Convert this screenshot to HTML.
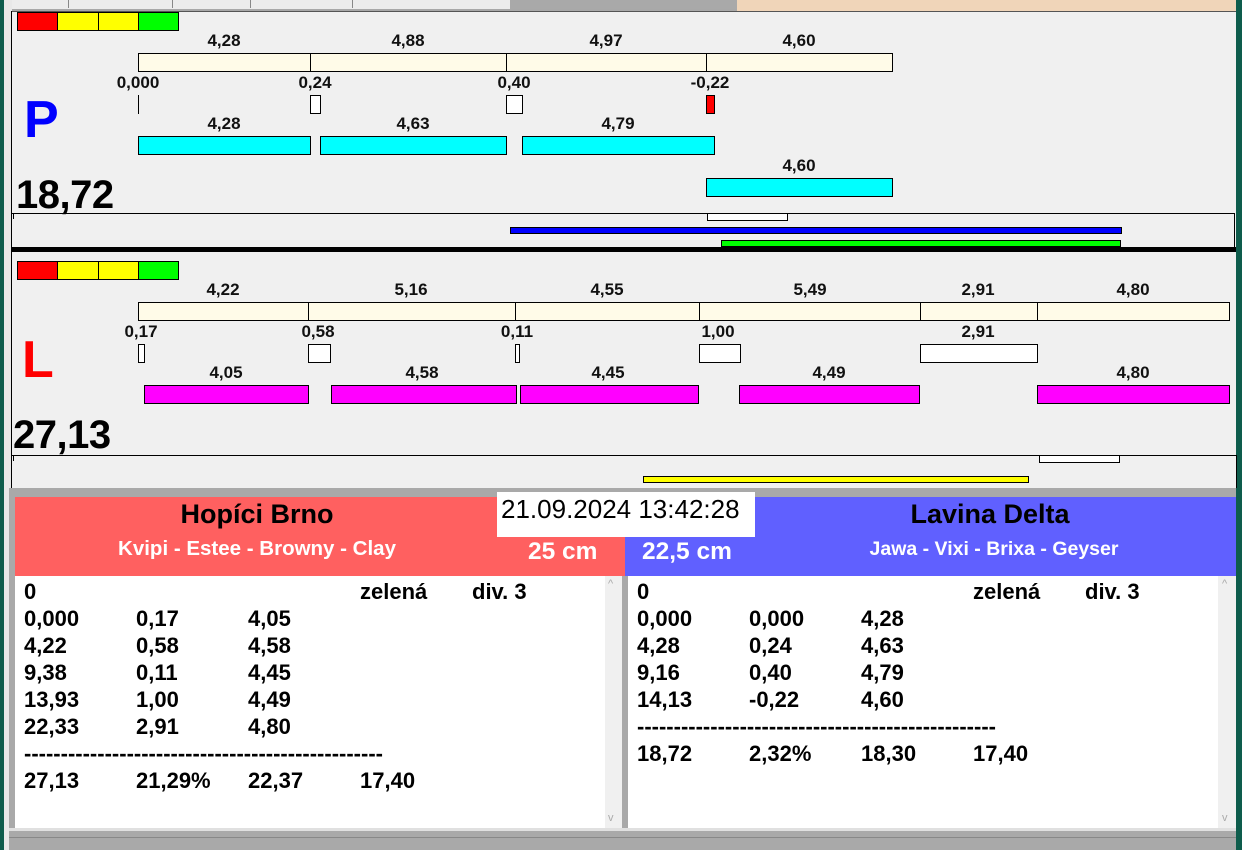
<!DOCTYPE html>
<html><head><meta charset="utf-8">
<style>
*{margin:0;padding:0;box-sizing:border-box}
body{width:1242px;height:850px;position:relative;overflow:hidden;background:#f0f0f0;font-family:"Liberation Sans",sans-serif}
div{position:absolute}
.b{border:1px solid #000}
.t{font-weight:bold;font-size:17px;color:#111;white-space:nowrap;transform:translateX(-50%);line-height:17px}
.cr{background:#fffbe8}
.cy{background:#00ffff}
.mg{background:#ff00ff}
.w{background:#fff}
.row{font-weight:bold;font-size:22px;color:#000;line-height:27px;white-space:nowrap}
</style></head><body>
<div style="left:0;top:0;width:4px;height:850px;background:#0e5c4c"></div>
<div style="left:4px;top:0;width:8px;height:850px;background:#e8e8e8"></div>
<div style="left:11px;top:11px;width:1px;height:480px;background:#000"></div>
<div style="left:1236px;top:0;width:6px;height:850px;background:#0e5c4c"></div>
<div style="left:12px;top:0;width:725px;height:11px;background:#ececec;border-bottom:2px solid #a8a8a8"></div>
<div style="left:68px;top:0;width:1px;height:8px;background:#888"></div>
<div style="left:172px;top:0;width:1px;height:8px;background:#888"></div>
<div style="left:250px;top:0;width:1px;height:8px;background:#888"></div>
<div style="left:352px;top:0;width:1px;height:8px;background:#888"></div>
<div style="left:510px;top:0;width:227px;height:9px;background:#a9a9a9"></div>
<div style="left:737px;top:0;width:499px;height:12px;background:#f0d5b9"></div>
<div style="left:12px;top:11px;width:1224px;height:1px;background:#555"></div>

<div class="b" style="left:17px;top:12px;width:41px;height:19px;background:#f00"></div>
<div class="b" style="left:57px;top:12px;width:42px;height:19px;background:#ff0"></div>
<div class="b" style="left:98px;top:12px;width:41px;height:19px;background:#ff0"></div>
<div class="b" style="left:138px;top:12px;width:41px;height:19px;background:#0f0"></div>

<div class="t" style="left:224px;top:32px">4,28</div>
<div class="t" style="left:408px;top:32px">4,88</div>
<div class="t" style="left:606px;top:32px">4,97</div>
<div class="t" style="left:799px;top:32px">4,60</div>
<div class="b cr" style="left:138px;top:53px;width:755px;height:19px"></div>
<div style="left:310px;top:53px;width:1px;height:19px;background:#000"></div>
<div style="left:506px;top:53px;width:1px;height:19px;background:#000"></div>
<div style="left:706px;top:53px;width:1px;height:19px;background:#000"></div>

<div class="t" style="left:138px;top:74px">0,000</div>
<div class="t" style="left:315px;top:74px">0,24</div>
<div class="t" style="left:514px;top:74px">0,40</div>
<div class="t" style="left:710px;top:74px">-0,22</div>
<div style="left:138px;top:95px;width:1px;height:19px;background:#000"></div>
<div class="b w" style="left:310px;top:95px;width:11px;height:19px"></div>
<div class="b w" style="left:506px;top:95px;width:17px;height:19px"></div>
<div class="b" style="left:706px;top:95px;width:9px;height:19px;background:#f00"></div>

<div class="t" style="left:224px;top:115px">4,28</div>
<div class="t" style="left:413px;top:115px">4,63</div>
<div class="t" style="left:618px;top:115px">4,79</div>
<div class="b cy" style="left:138px;top:136px;width:173px;height:19px"></div>
<div class="b cy" style="left:320px;top:136px;width:187px;height:19px"></div>
<div class="b cy" style="left:522px;top:136px;width:193px;height:19px"></div>
<div class="t" style="left:799px;top:157px">4,60</div>
<div class="b cy" style="left:706px;top:178px;width:187px;height:19px"></div>

<div style="left:24px;top:90px;font-weight:bold;font-size:52px;color:#0000ff;line-height:60px">P</div>
<div style="left:16px;top:172px;font-weight:bold;font-size:40px;color:#000;line-height:46px;letter-spacing:-0.5px">18,72</div>

<div style="left:12px;top:213px;width:1223px;height:1px;background:#000"></div>
<div style="left:1234px;top:213px;width:1px;height:35px;background:#000"></div>
<div style="left:13px;top:214px;width:1px;height:5px;background:#000"></div>
<div class="b w" style="left:707px;top:213px;width:81px;height:8px"></div>
<div class="b" style="left:510px;top:227px;width:612px;height:7px;background:#0000ff"></div>
<div class="b" style="left:721px;top:240px;width:400px;height:7px;background:#00ff00"></div>
<div style="left:12px;top:247px;width:1224px;height:5px;background:#000"></div>

<div class="b" style="left:17px;top:261px;width:41px;height:19px;background:#f00"></div>
<div class="b" style="left:57px;top:261px;width:42px;height:19px;background:#ff0"></div>
<div class="b" style="left:98px;top:261px;width:41px;height:19px;background:#ff0"></div>
<div class="b" style="left:138px;top:261px;width:41px;height:19px;background:#0f0"></div>

<div class="t" style="left:223px;top:281px">4,22</div>
<div class="t" style="left:411px;top:281px">5,16</div>
<div class="t" style="left:607px;top:281px">4,55</div>
<div class="t" style="left:810px;top:281px">5,49</div>
<div class="t" style="left:978px;top:281px">2,91</div>
<div class="t" style="left:1133px;top:281px">4,80</div>
<div class="b cr" style="left:138px;top:302px;width:1092px;height:19px"></div>
<div style="left:308px;top:302px;width:1px;height:19px;background:#000"></div>
<div style="left:515px;top:302px;width:1px;height:19px;background:#000"></div>
<div style="left:699px;top:302px;width:1px;height:19px;background:#000"></div>
<div style="left:920px;top:302px;width:1px;height:19px;background:#000"></div>
<div style="left:1037px;top:302px;width:1px;height:19px;background:#000"></div>

<div class="t" style="left:141px;top:323px">0,17</div>
<div class="t" style="left:318px;top:323px">0,58</div>
<div class="t" style="left:517px;top:323px">0,11</div>
<div class="t" style="left:718px;top:323px">1,00</div>
<div class="t" style="left:978px;top:323px">2,91</div>
<div class="b w" style="left:138px;top:344px;width:7px;height:19px"></div>
<div class="b w" style="left:308px;top:344px;width:23px;height:19px"></div>
<div class="b w" style="left:515px;top:344px;width:5px;height:19px"></div>
<div class="b w" style="left:699px;top:344px;width:42px;height:19px"></div>
<div class="b w" style="left:920px;top:344px;width:118px;height:19px"></div>

<div class="t" style="left:226px;top:364px">4,05</div>
<div class="t" style="left:422px;top:364px">4,58</div>
<div class="t" style="left:608px;top:364px">4,45</div>
<div class="t" style="left:829px;top:364px">4,49</div>
<div class="t" style="left:1133px;top:364px">4,80</div>
<div class="b mg" style="left:144px;top:385px;width:165px;height:19px"></div>
<div class="b mg" style="left:331px;top:385px;width:186px;height:19px"></div>
<div class="b mg" style="left:520px;top:385px;width:179px;height:19px"></div>
<div class="b mg" style="left:739px;top:385px;width:181px;height:19px"></div>
<div class="b mg" style="left:1037px;top:385px;width:193px;height:19px"></div>

<div style="left:22px;top:330px;font-weight:bold;font-size:52px;color:#ff0000;line-height:60px">L</div>
<div style="left:13px;top:412px;font-weight:bold;font-size:40px;color:#000;line-height:46px;letter-spacing:-0.5px">27,13</div>

<div style="left:12px;top:455px;width:1225px;height:1px;background:#000"></div>
<div style="left:1236px;top:455px;width:1px;height:33px;background:#000"></div>
<div style="left:13px;top:456px;width:1px;height:5px;background:#000"></div>
<div class="b w" style="left:1039px;top:455px;width:81px;height:8px"></div>
<div class="b" style="left:643px;top:476px;width:386px;height:7px;background:#ff0"></div>

<div style="left:9px;top:488px;width:1227px;height:362px;background:#a9a9a9"></div>
<div style="left:15px;top:497px;width:611px;height:79px;background:#ff6060"></div>
<div style="left:625px;top:497px;width:611px;height:79px;background:#6060ff"></div>
<div style="left:497px;top:492px;width:258px;height:45px;background:#fff"></div>
<div style="left:501px;top:493px;font-size:26px;color:#000;line-height:33px;white-space:nowrap">21.09.2024 13:42:28</div>
<div style="left:257px;top:499px;transform:translateX(-50%);font-weight:bold;font-size:27px;line-height:30px;white-space:nowrap">Hopíci Brno</div>
<div style="left:257px;top:538px;transform:translateX(-50%);font-weight:bold;font-size:20.5px;color:#fff;line-height:22px;white-space:nowrap">Kvipi - Estee - Browny - Clay</div>
<div style="left:528px;top:539px;font-weight:bold;font-size:24.5px;color:#fff;line-height:26px;white-space:nowrap">25 cm</div>
<div style="left:990px;top:499px;transform:translateX(-50%);font-weight:bold;font-size:27px;line-height:30px;white-space:nowrap">Lavina Delta</div>
<div style="left:994px;top:538px;transform:translateX(-50%);font-weight:bold;font-size:19.5px;color:#fff;line-height:22px;white-space:nowrap">Jawa - Vixi - Brixa - Geyser</div>
<div style="left:642px;top:539px;font-weight:bold;font-size:24.5px;color:#fff;line-height:26px;white-space:nowrap">22,5 cm</div>

<div style="left:15px;top:576px;width:590px;height:252px;background:#fff"></div>
<div style="left:605px;top:576px;width:17px;height:252px;background:#f0f0f0"></div>
<div style="left:608px;top:578px;font-size:11px;color:#aaa">^</div>
<div style="left:608px;top:812px;font-size:11px;color:#aaa">v</div>
<div style="left:628px;top:576px;width:590px;height:252px;background:#fff"></div>
<div style="left:1218px;top:576px;width:18px;height:252px;background:#f0f0f0"></div>
<div style="left:1222px;top:578px;font-size:11px;color:#aaa">^</div>
<div style="left:1222px;top:812px;font-size:11px;color:#aaa">v</div>
<div style="left:9px;top:828px;width:1227px;height:3px;background:#e0e0e0"></div>
<div style="left:9px;top:837px;width:1227px;height:1px;background:#888"></div>

<div class="row" style="left:24px;top:578px">0</div>
<div class="row" style="left:360px;top:578px">zelená</div>
<div class="row" style="left:472px;top:578px">div. 3</div>
<div class="row" style="left:24px;top:605px">0,000</div><div class="row" style="left:136px;top:605px">0,17</div><div class="row" style="left:248px;top:605px">4,05</div>
<div class="row" style="left:24px;top:632px">4,22</div><div class="row" style="left:136px;top:632px">0,58</div><div class="row" style="left:248px;top:632px">4,58</div>
<div class="row" style="left:24px;top:659px">9,38</div><div class="row" style="left:136px;top:659px">0,11</div><div class="row" style="left:248px;top:659px">4,45</div>
<div class="row" style="left:24px;top:686px">13,93</div><div class="row" style="left:136px;top:686px">1,00</div><div class="row" style="left:248px;top:686px">4,49</div>
<div class="row" style="left:24px;top:713px">22,33</div><div class="row" style="left:136px;top:713px">2,91</div><div class="row" style="left:248px;top:713px">4,80</div>
<div class="row" style="left:24px;top:740px">-------------------------------------------------</div>
<div class="row" style="left:24px;top:767px">27,13</div><div class="row" style="left:136px;top:767px">21,29%</div><div class="row" style="left:248px;top:767px">22,37</div><div class="row" style="left:360px;top:767px">17,40</div>

<div class="row" style="left:637px;top:578px">0</div>
<div class="row" style="left:973px;top:578px">zelená</div>
<div class="row" style="left:1085px;top:578px">div. 3</div>
<div class="row" style="left:637px;top:605px">0,000</div><div class="row" style="left:749px;top:605px">0,000</div><div class="row" style="left:861px;top:605px">4,28</div>
<div class="row" style="left:637px;top:632px">4,28</div><div class="row" style="left:749px;top:632px">0,24</div><div class="row" style="left:861px;top:632px">4,63</div>
<div class="row" style="left:637px;top:659px">9,16</div><div class="row" style="left:749px;top:659px">0,40</div><div class="row" style="left:861px;top:659px">4,79</div>
<div class="row" style="left:637px;top:686px">14,13</div><div class="row" style="left:749px;top:686px">-0,22</div><div class="row" style="left:861px;top:686px">4,60</div>
<div class="row" style="left:637px;top:713px">-------------------------------------------------</div>
<div class="row" style="left:637px;top:740px">18,72</div><div class="row" style="left:749px;top:740px">2,32%</div><div class="row" style="left:861px;top:740px">18,30</div><div class="row" style="left:973px;top:740px">17,40</div>
</body></html>
